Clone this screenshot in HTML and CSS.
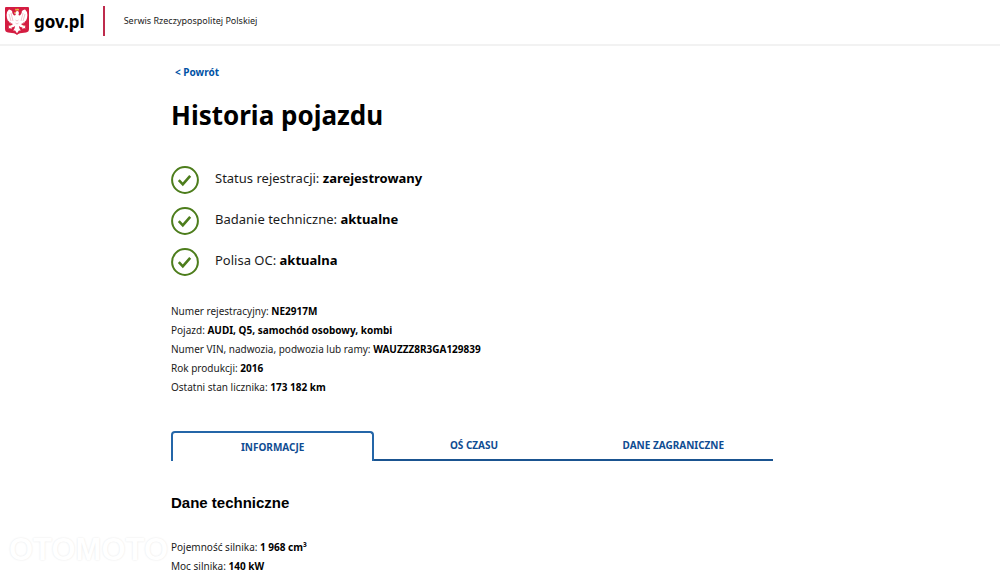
FILE: index.html
```html
<!DOCTYPE html>
<html lang="pl">
<head>
  <meta charset="UTF-8">
  <title>Historia pojazdu - gov.pl</title>
  <meta name="viewport" content="width=device-width, initial-scale=1.0">
  <link rel="stylesheet" href="styles.css">
</head>
<body>
  <!-- Nagłówek serwisu -->
  <header class="header">
    <a class="logo" href="#">
      <svg class="logo-eagle" viewBox="0 0 24 28" aria-hidden="true">
        <path d="M1 0h22a1 1 0 0 1 1 1v21q0 3-3 3.500l-6 .7q-2 .4-3 1.800q-1-1.400-3-1.800l-6-.7q-3-.5-3-3.500V1a1 1 0 0 1 1-1z" fill="#d41c41"/>
        <g fill="#fff">
          <path d="M10.500 5.500q.2-1.500 1.800-1.500q1.600.1 1.600 1.800q0 1.200-.5 2.200q1.400 1 2.200-.3q1.400-1.700 1.300-3.700q1.600-1.600 3.200-1.500q2.200 1.800 2.300 5.500q0 3.500-1.600 6.500l-.7-1.100-.5 2.400-.9-.9-.6 2-1-.8-.8 1.300q2.400 1.600 4.200 1.400l-.5 1.200.4 1.500-1.500-.6-1.300 1.300-.2-1.800q-2-.3-3.500-1.400l.6 2.400 1.300 2.200-1.900-.2-1.900 2.800-1.900-2.800-1.900.2 1.300-2.200.6-2.400q-1.500 1.100-3.500 1.400l-.2 1.800-1.300-1.300-1.500.6.400-1.500-.5-1.200q1.800.2 4.200-1.400l-.8-1.300-1 .8-.6-2-.9.900-.5-2.400-.7 1.100q-1.600-3-1.600-6.500q.1-3.700 2.300-5.500q1.600-.1 3.200 1.500q-.1 2 1.300 3.700q.8 1.300 2.200.3q.3-.9-.1-1.400l-1.600-.3z"/>
        </g>
        <g fill="none" stroke="#e58a9b" stroke-width=".5">
          <path d="M4 7l2 7M6 6l2 8M20 7l-2 7M18 6l-2 8M10.500 13l1.500 1 1.500-1M10.500 16l1.500 1 1.500-1"/>
        </g>
        <path d="M10.300 3.600l-.2-2 1.200.7.800-1.100.8 1.100 1.200-.7-.3 2z" fill="#e9b93c"/>
        <path d="M10.500 5l-1.400.7 1.500.4zM6.300 17.800l-1.500 2M17.700 17.800l1.500 2" fill="#e9b93c" stroke="#e9b93c" stroke-width=".4"/>
      </svg>
      <span class="logo-text">gov.pl</span>
    </a>
    <span class="header-title">Serwis Rzeczypospolitej Polskiej</span>
  </header>

  <main class="content">
    <a class="back" href="#">&lt; Powrót</a>
    <h1>Historia pojazdu</h1>

    <!-- Statusy pojazdu -->
    <ul class="status-list">
      <li>
        <svg class="check" viewBox="0 0 28 28" aria-hidden="true">
          <circle cx="14" cy="14" r="12.900"/>
          <path d="M7.800 14.200l4 4.200 7.400-8.600"/>
        </svg>
        <span>Status rejestracji: <strong>zarejestrowany</strong></span>
      </li>
      <li>
        <svg class="check" viewBox="0 0 28 28" aria-hidden="true">
          <circle cx="14" cy="14" r="12.900"/>
          <path d="M7.800 14.200l4 4.200 7.400-8.600"/>
        </svg>
        <span>Badanie techniczne: <strong>aktualne</strong></span>
      </li>
      <li>
        <svg class="check" viewBox="0 0 28 28" aria-hidden="true">
          <circle cx="14" cy="14" r="12.900"/>
          <path d="M7.800 14.200l4 4.200 7.400-8.600"/>
        </svg>
        <span>Polisa OC: <strong>aktualna</strong></span>
      </li>
    </ul>

    <!-- Dane podstawowe -->
    <div class="details">
      <p>Numer rejestracyjny: <strong>NE2917M</strong></p>
      <p>Pojazd: <strong>AUDI, Q5, samochód osobowy, kombi</strong></p>
      <p>Numer VIN, nadwozia, podwozia lub ramy: <strong>WAUZZZ8R3GA129839</strong></p>
      <p>Rok produkcji: <strong>2016</strong></p>
      <p>Ostatni stan licznika: <strong>173 182 km</strong></p>
    </div>

    <!-- Zakładki -->
    <div class="tabs" role="tablist">
      <button class="tab active" type="button" role="tab" aria-selected="true">INFORMACJE</button>
      <button class="tab" type="button" role="tab" aria-selected="false">OŚ CZASU</button>
      <button class="tab" type="button" role="tab" aria-selected="false">DANE ZAGRANICZNE</button>
    </div>

    <h2>Dane techniczne</h2>
    <div class="details">
      <p>Pojemność silnika: <strong>1 968 cm³</strong></p>
      <p>Moc silnika: <strong>140 kW</strong></p>
    </div>
  </main>

  <div class="watermark">OTOMOTO</div>
</body>
</html>
```
FILE: styles.css
```css
* {
  box-sizing: border-box;
}
body {
  margin: 0;
  font-family: "Noto Sans", sans-serif;
  font-size: 10px;
  line-height: 19px;
  color: #1b1b1b;
  background: #fff;
}
strong {
  color: #000;
}

/* Nagłówek */
.header {
  display: flex;
  align-items: center;
  height: 46px;
  padding: 0 5px 2px;
  border-bottom: 2px solid #f2f2f2;
}
.logo {
  display: flex;
  align-items: center;
  gap: 5px;
  color: #000;
  text-decoration: none;
}
.logo-eagle {
  width: 24px;
  height: 28px;
}
.logo-text {
  font-size: 17px;
  font-weight: bold;
}
.header-title {
  margin-left: 18px;
  padding-left: 19px;
  border-left: 2px solid #be2b4c;
  font-size: 9px;
  line-height: 30px;
}

/* Treść */
.content {
  width: 66%;
  max-width: 658px;
  margin: 0 auto;
  padding: 17px 28px 0 0;
}
.back {
  display: block;
  width: max-content;
  margin-left: 4px;
  color: #0052a5;
  font-weight: bold;
  text-decoration: none;
}
h1 {
  margin: 14px 0 32px;
  font-size: 26px;
  line-height: 38px;
  color: #000;
}
.status-list {
  display: flex;
  flex-direction: column;
  gap: 13px;
  margin: 0 0 26px;
  padding: 0;
  list-style: none;
}
.status-list li {
  display: flex;
  align-items: center;
  gap: 16px;
  font-size: 13px;
}
.status-list span {
  padding-bottom: 3px;
}
.check {
  width: 28px;
  height: 28px;
  fill: none;
  stroke: #4d7d1c;
  stroke-width: 2;
}
.check path {
  stroke-width: 2.600;
}
.details p {
  margin: 0;
}

/* Zakładki */
.tabs {
  display: flex;
  margin: 34px 28px 0 0;
}
.tab {
  flex: 1;
  height: 30px;
  padding: 0;
  border: 0;
  border-bottom: 2px solid #1a5490;
  background: none;
  color: #0f4c92;
  font-family: inherit;
  font-size: 10px;
  font-weight: bold;
  cursor: pointer;
}
.tab.active {
  border: 2px solid #2466a8;
  border-bottom: 0;
  border-radius: 4px 4px 0 0;
}
h2 {
  margin: 32px 0 25px;
  font-family: "Liberation Sans", Arial, sans-serif;
  font-size: 15px;
  line-height: 20px;
  color: #000;
}

/* Znak wodny */
.watermark {
  position: absolute;
  left: 9px;
  bottom: 6px;
  z-index: -1;
  color: #fff;
  font-family: "Liberation Sans", Arial, sans-serif;
  font-size: 31px;
  font-weight: bold;
  line-height: 30px;
  text-shadow: 0 0 2px #e4e4e4;
  pointer-events: none;
}
```
